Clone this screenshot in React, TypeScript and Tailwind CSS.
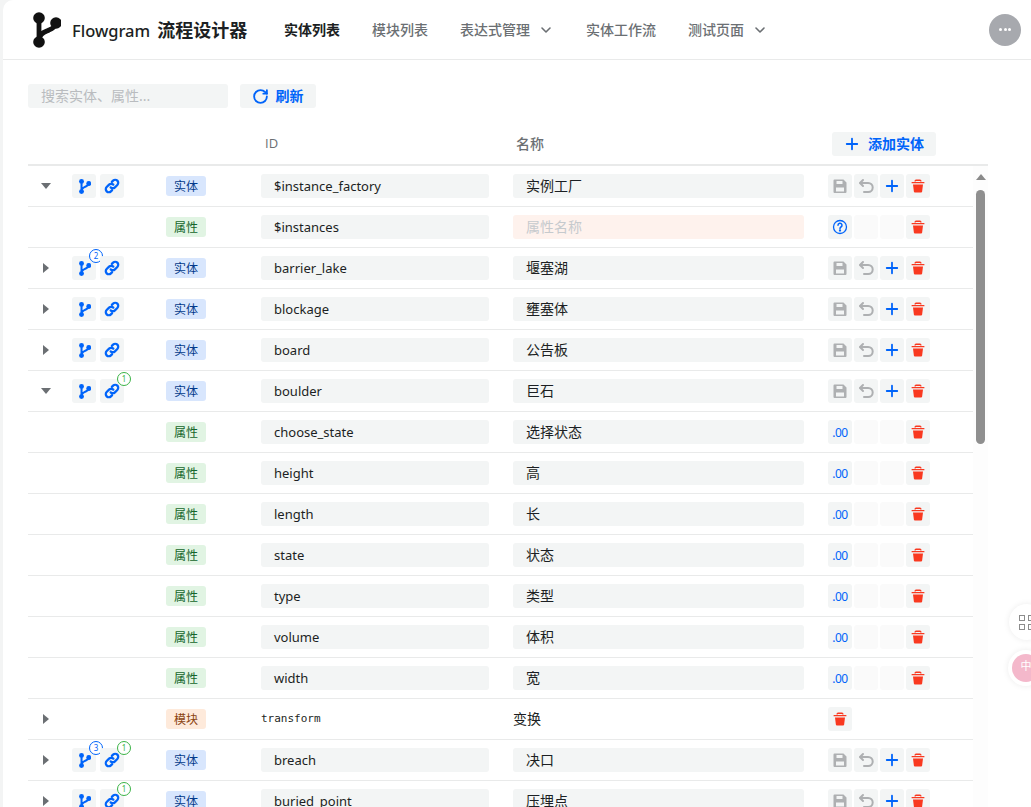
import { ChevronDown, RotateCw, Plus } from "lucide-react";

const FONT = "font-['Noto_Sans','Noto_Sans_CJK_SC',sans-serif]";

type Row = {
  kind: "entity" | "attr" | "module";
  id: string;
  name: string;
  open?: boolean;
  branch?: number;
  link?: number;
  unset?: boolean;
};

const rows: Row[] = [
  { kind: "entity", id: "$instance_factory", name: "实例工厂", open: true },
  { kind: "attr", id: "$instances", name: "", unset: true },
  { kind: "entity", id: "barrier_lake", name: "堰塞湖", branch: 2 },
  { kind: "entity", id: "blockage", name: "壅塞体" },
  { kind: "entity", id: "board", name: "公告板" },
  { kind: "entity", id: "boulder", name: "巨石", open: true, link: 1 },
  { kind: "attr", id: "choose_state", name: "选择状态" },
  { kind: "attr", id: "height", name: "高" },
  { kind: "attr", id: "length", name: "长" },
  { kind: "attr", id: "state", name: "状态" },
  { kind: "attr", id: "type", name: "类型" },
  { kind: "attr", id: "volume", name: "体积" },
  { kind: "attr", id: "width", name: "宽" },
  { kind: "module", id: "transform", name: "变换" },
  { kind: "entity", id: "breach", name: "决口", branch: 3, link: 1 },
  { kind: "entity", id: "buried_point", name: "压埋点", link: 1 },
];

// same mark is used for the logo and the row buttons
const BranchIcon = ({ width = 13, height = 17, color = "#0064fa" }: { width?: number; height?: number; color?: string }) => (
  <svg width={width} height={height} viewBox="0 0 30 40" fill="none">
    <path d="M8 8v24M8 29c1-6 6-7 10-9 4-1.500 6-3 7-7" stroke={color} strokeWidth="4.800" strokeLinecap="round" />
    <circle cx="8" cy="8" r="5.800" fill={color} />
    <circle cx="8" cy="32" r="5.800" fill={color} />
    <circle cx="25" cy="13" r="5.800" fill={color} />
  </svg>
);

const LinkIcon = () => (
  <svg width="16" height="16" viewBox="0 0 24 24" fill="none" stroke="#0064fa" strokeWidth="3.400" strokeLinecap="round">
    <path d="M10 14a4.500 4.500 0 0 0 6.400 0l3.600-3.600A4.500 4.500 0 0 0 13.600 4l-1.800 1.800" />
    <path d="M14 10a4.500 4.500 0 0 0-6.400 0L4 13.600A4.500 4.500 0 0 0 10.400 20l1.800-1.800" />
  </svg>
);

const SaveIcon = () => (
  <svg width="16" height="16" viewBox="0 0 16 16">
    <path
      fillRule="evenodd"
      d="M2.500 1.500h9l3 3v9.500a1 1 0 0 1-1 1h-11a1 1 0 0 1-1-1v-11.500a1 1 0 0 1 1-1zM4.500 3v3h6V3zM4 9.500v4h8v-4z"
      fill="#aeb0b2"
    />
  </svg>
);

const UndoIcon = () => (
  <svg width="16" height="16" viewBox="0 0 16 16" fill="none" stroke="#aeb0b2" strokeWidth="2" strokeLinecap="round" strokeLinejoin="round">
    <path d="M5 2 2 5l3 3" />
    <path d="M2.500 5H10.200a3.900 3.900 0 0 1 0 9H6" />
  </svg>
);

const TrashIcon = () => (
  <svg width="16" height="16" viewBox="0 0 16 16" fill="#f93920">
    <path d="M6 1.500h4a1.500 1.500 0 0 1 1.500 1.500v.500h-1.300V3H5.800v.500H4.500V3A1.500 1.500 0 0 1 6 1.500z" />
    <rect x="1.500" y="4" width="13" height="1.300" rx=".6" />
    <path d="M3 6.500h10l-.9 7.200a1 1 0 0 1-1 .8H4.900a1 1 0 0 1-1-.8z" />
  </svg>
);

const HelpIcon = () => (
  <svg width="16" height="16" viewBox="0 0 16 16" fill="none" stroke="#0064fa" strokeWidth="1.300" strokeLinecap="round">
    <circle cx="8" cy="8" r="6.500" />
    <path d="M6 6.300a2 2 0 1 1 3 1.700c-.7.400-1 .8-1 1.500" strokeWidth="1.500" />
    <circle cx="8" cy="11.500" r=".5" fill="#0064fa" />
  </svg>
);

const IconBtn = ({ children }: { children?: React.ReactNode }) => (
  <div className="flex h-6 w-6 items-center justify-center rounded-[3px] bg-[#f3f5f5]">{children}</div>
);

const GhostBtn = () => <div className="h-6 w-6 rounded-[3px] bg-[#fafafa]" />;

const Badge = ({ n, green }: { n: number; green?: boolean }) => (
  <span
    className={`absolute -top-[7px] -right-[7px] flex h-[14px] w-[14px] items-center justify-center rounded-full border-[1.5px] bg-white text-[8px] leading-none ${
      green ? "border-[#3bb346] text-[#3bb346]" : "border-[#0064fa] text-[#0064fa]"
    }`}
  >
    {n}
  </span>
);

const Tag = ({ kind }: { kind: Row["kind"] }) => {
  if (kind === "entity")
    return <span className="flex h-5 w-10 items-center justify-center rounded-[3px] bg-[#d8e6fd] pt-px text-xs text-[#033a8a]">实体</span>;
  if (kind === "attr")
    return <span className="flex h-5 w-10 items-center justify-center rounded-[3px] bg-[#e1f4e3] pt-px text-xs text-[#14662a]">属性</span>;
  return <span className="flex h-5 w-10 items-center justify-center rounded-[3px] bg-[#feeadb] pt-px text-xs text-[#8a4310]">模块</span>;
};

const IdField = ({ value }: { value: string }) => (
  <div className="flex h-6 w-[228px] items-center rounded-[3px] bg-[#f3f5f5] pt-px pl-[13px] text-[13px] text-[#1c1f23]">{value}</div>
);

const NameField = ({ value }: { value: string }) => (
  <div className="flex h-6 w-[291px] items-center rounded-[3px] bg-[#f3f5f5] pl-[13px] text-sm text-[#1c1f23]">{value}</div>
);

const TableRow = ({ row }: { row: Row }) => (
  <div className="flex h-[41px] shrink-0 items-center border-b border-[#e9eaea]">
    <div className="flex w-[44px] shrink-0 justify-center pr-[8px]">
      {row.kind !== "attr" &&
        (row.open ? (
          <span className="h-0 w-0 border-x-[5px] border-t-[6px] border-x-transparent border-t-[#6b6f73]" />
        ) : (
          <span className="h-0 w-0 border-y-[5px] border-l-[6px] border-y-transparent border-l-[#6b6f73]" />
        ))}
    </div>
    <div className="flex w-[94px] shrink-0 gap-1">
      {row.kind === "entity" && (
        <>
          <div className="relative">
            <IconBtn>
              <BranchIcon />
            </IconBtn>
            {row.branch && <Badge n={row.branch} />}
          </div>
          <div className="relative">
            <IconBtn>
              <LinkIcon />
            </IconBtn>
            {row.link && <Badge n={row.link} green />}
          </div>
        </>
      )}
    </div>
    <div className="w-[95px] shrink-0">
      <Tag kind={row.kind} />
    </div>
    {row.kind === "module" ? (
      <>
        <div className="w-[252px] shrink-0 pt-px font-['DejaVu_Sans_Mono',monospace] text-[11px] text-[#1c1f23]">{row.id}</div>
        <div className="w-[315px] shrink-0 text-sm text-[#1c1f23]">{row.name}</div>
      </>
    ) : (
      <>
        <div className="w-[252px] shrink-0">
          <IdField value={row.id} />
        </div>
        <div className="w-[315px] shrink-0">
          {row.unset ? (
            <div className="flex h-6 w-[291px] items-center rounded-[3px] bg-[#fef2ed] pl-[13px] text-sm text-[#c6cacd]">属性名称</div>
          ) : (
            <NameField value={row.name} />
          )}
        </div>
      </>
    )}
    <div className="flex gap-[2px]">
      {row.kind === "entity" && (
        <>
          <IconBtn>
            <SaveIcon />
          </IconBtn>
          <IconBtn>
            <UndoIcon />
          </IconBtn>
          <IconBtn>
            <Plus size={18} strokeWidth={2.4} color="#0064fa" />
          </IconBtn>
          <IconBtn>
            <TrashIcon />
          </IconBtn>
        </>
      )}
      {row.kind === "attr" && (
        <>
          <IconBtn>
            {row.unset ? <HelpIcon /> : <span className="pt-px text-xs tracking-[-0.5px] text-[#0064fa]">.00</span>}
          </IconBtn>
          <GhostBtn />
          <GhostBtn />
          <IconBtn>
            <TrashIcon />
          </IconBtn>
        </>
      )}
      {row.kind === "module" && (
        <IconBtn>
          <TrashIcon />
        </IconBtn>
      )}
    </div>
  </div>
);

const NavItem = ({ label, active, arrow }: { label: string; active?: boolean; arrow?: boolean }) => (
  <div className={`flex items-center gap-2 text-sm ${active ? "font-semibold text-[#1c1f23]" : "font-medium text-[#6b6f73]"}`}>
    <span>{label}</span>
    {arrow && <ChevronDown size={16} strokeWidth={2.4} color="#6b6f73" />}
  </div>
);

export default function App() {
  return (
    <div className={`relative h-[807px] w-[1031px] overflow-hidden bg-[#f3f4f4] pl-[3px] ${FONT}`}>
      <div className="flex h-full flex-col overflow-hidden rounded-tl-[10px] bg-white">
        {/* Header */}
        <header className="flex h-[60px] shrink-0 items-center border-b border-[#e9eaea] pr-[10px] pl-[28px]">
          <BranchIcon width={30} height={40} color="#111" />
          <div className="ml-[11px] flex w-[212px] shrink-0 items-baseline gap-[7px] font-medium text-[#1c1f23]">
            <span className="text-[16.5px]">Flowgram</span>
            <span className="text-lg font-semibold">流程设计器</span>
          </div>
          <nav className="flex items-center gap-8">
            <NavItem label="实体列表" active />
            <NavItem label="模块列表" />
            <NavItem label="表达式管理" arrow />
            <NavItem label="实体工作流" />
            <NavItem label="测试页面" arrow />
          </nav>
          <div className="ml-auto flex h-8 w-8 items-center justify-center gap-[1.5px] rounded-full bg-[#a7a9ae]">
            <span className="h-[3px] w-[3px] rounded-full bg-white" />
            <span className="h-[3px] w-[3px] rounded-full bg-white" />
            <span className="h-[3px] w-[3px] rounded-full bg-white" />
          </div>
        </header>

        <div className="flex min-h-0 flex-1 flex-col pl-[25px]">
          {/* Toolbar */}
          <div className="mt-[24px] flex h-6 shrink-0 items-center gap-3">
            <div className="flex h-6 w-[200px] items-center rounded-[3px] bg-[#f3f5f5] pl-[13px] text-sm text-[#b9bcbf]">搜索实体、属性...</div>
            <div className="flex h-6 w-[76px] items-center justify-center gap-[7px] rounded-[3px] bg-[#f3f5f5] pr-px text-sm font-semibold text-[#0064fa]">
              <RotateCw size={17} strokeWidth={2.6} />
              <span>刷新</span>
            </div>
          </div>

          {/* Table head */}
          <div className="mt-[16px] flex h-[42px] w-[960px] shrink-0 items-center border-b-2 border-[#e9eaea] pb-[1px] font-medium text-[#6b6f73]">
            <div className="w-[237px] shrink-0" />
            <div className="w-[251px] shrink-0 font-['Open_Sans',sans-serif] text-[13px]">ID</div>
            <div className="w-[316px] shrink-0 text-sm">名称</div>
            <div className="flex h-6 w-[104px] items-center gap-[7px] rounded-[3px] bg-[#f3f5f5] pl-[11px] text-sm font-semibold text-[#0064fa]">
              <Plus size={18} strokeWidth={2.4} />
              <span>添加实体</span>
            </div>
          </div>

          {/* Table body */}
          <div className="flex min-h-0 w-[960px] flex-1">
            <div className="flex w-[945px] shrink-0 flex-col">
              {rows.map((row) => (
                <TableRow key={row.id} row={row} />
              ))}
            </div>
            <div className="relative w-[15px] shrink-0 bg-[#fdfdfd]">
              <span className="absolute top-[8px] left-[3px] h-0 w-0 border-x-[5px] border-b-[6px] border-x-transparent border-b-[#8a8a8a]" />
              <div className="absolute top-[24px] left-[3px] h-[254px] w-[9px] rounded-full bg-[#8f8f8f]" />
            </div>
          </div>
        </div>
      </div>

      {/* Floating widgets */}
      <div className="absolute top-[604px] left-[1009px] flex h-[36px] w-[36px] items-center rounded-full bg-white pl-[10px] shadow-[0_0_6px_rgba(0,0,0,0.08)]">
        <div className="grid grid-cols-2 gap-[3px]">
          <span className="h-[6px] w-[6px] border border-[#8c8c8c]" />
          <span className="h-[6px] w-[6px] border border-[#8c8c8c]" />
          <span className="h-[6px] w-[6px] border border-[#8c8c8c]" />
          <span className="h-[6px] w-[6px] border border-[#8c8c8c]" />
        </div>
      </div>
      <div className="absolute top-[650px] left-[1008px] flex h-[36px] w-[36px] items-center justify-center rounded-full bg-white shadow-[0_0_6px_rgba(0,0,0,0.08)]">
        <div className="flex h-7 w-7 items-center justify-center rounded-full bg-[#f4b8cb] pb-[6px] text-[11px] leading-none text-white">中</div>
      </div>
    </div>
  );
}
